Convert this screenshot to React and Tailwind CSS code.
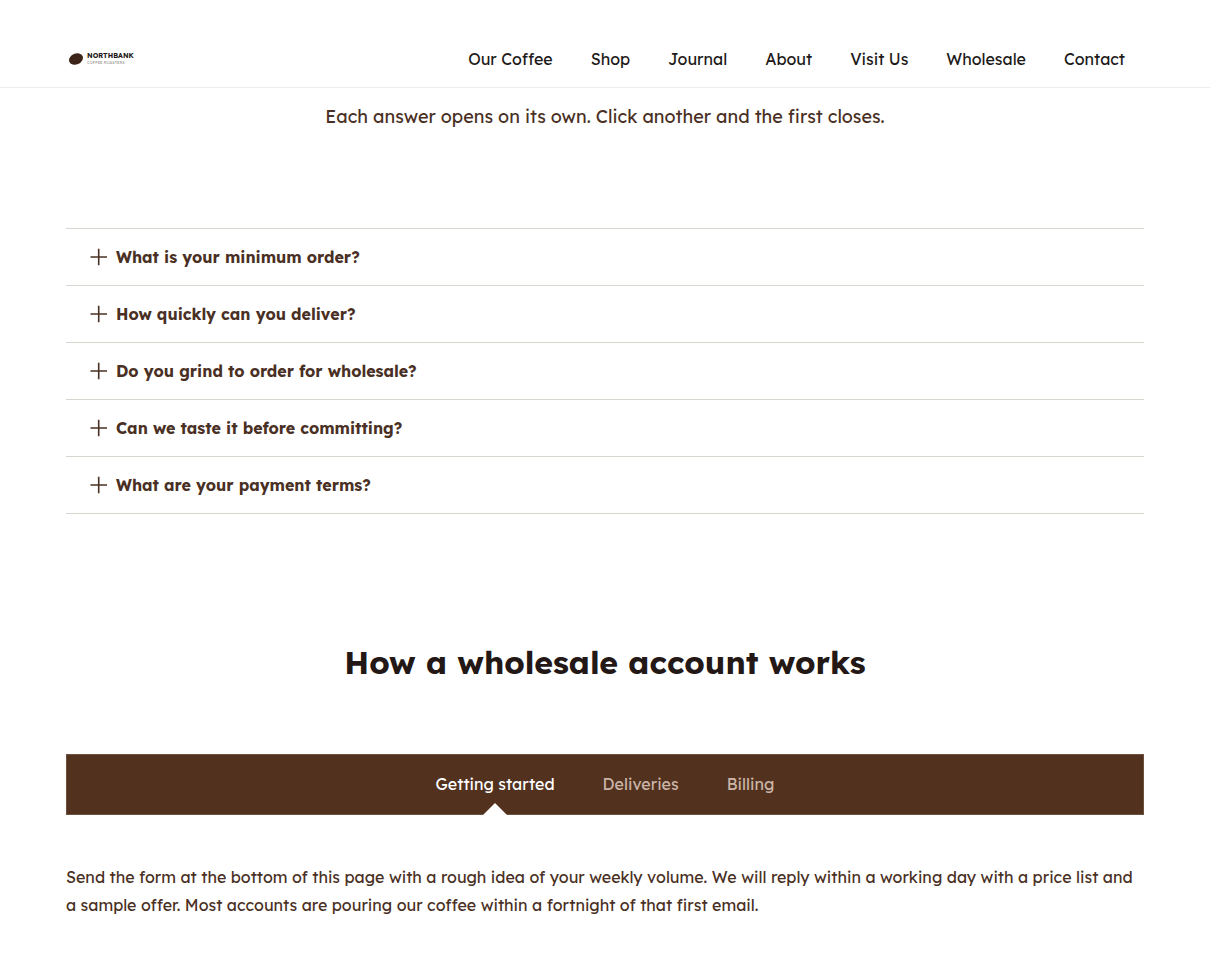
import React, { useState } from "react";

const navLinks = [
  { label: "Our Coffee", href: "#our-coffee" },
  { label: "Shop", href: "#shop" },
  { label: "Journal", href: "#journal" },
  { label: "About", href: "#about" },
  { label: "Visit Us", href: "#visit" },
  { label: "Wholesale", href: "#wholesale" },
  { label: "Contact", href: "#contact" },
];

const questions = [
  { q: "What is your minimum order?", a: "Ask us for the current minimum for your area." },
  { q: "How quickly can you deliver?", a: "We will confirm a delivery day with your order." },
  { q: "Do you grind to order for wholesale?", a: "Tell us your brew method and we will advise." },
  { q: "Can we taste it before committing?", a: "Yes, get in touch to arrange a tasting." },
  { q: "What are your payment terms?", a: "Terms are agreed when your account is opened." },
];

const tabs = [
  {
    label: "Getting started",
    text: "Send the form at the bottom of this page with a rough idea of your weekly volume. We will reply within a working day with a price list and a sample offer. Most accounts are pouring our coffee within a fortnight of that first email.",
  },
  { label: "Deliveries", text: "Your delivery day is agreed with you when the account opens." },
  { label: "Billing", text: "Invoices are sent by email to your accounts address." },
];

function Logo() {
  return (
    <a href="#home" className="flex items-center gap-[3px] text-[#231815]">
      <svg viewBox="0 0 16 14" className="h-[14px] w-4" aria-hidden="true">
        <ellipse cx="8" cy="7" rx="7.2" ry="5.4" transform="rotate(-24 8 7)" fill="#3b2417" />
        <path d="M2.5 10.5C5 7 8.500 9 13.500 3.800" fill="none" stroke="#4a3020" strokeWidth="0.6" />
      </svg>
      <span className="flex flex-col">
        <span className="text-[7px] leading-[8px] font-bold">NORTHBANK</span>
        <span className="text-[4px] leading-[6px] text-[#a09a96]">COFFEE ROASTERS</span>
      </span>
    </a>
  );
}

function Header() {
  return (
    <header className="border-b border-[#ededed] bg-white pt-[30px]">
      <div className="flex h-[57px] items-center justify-between pr-[85px] pl-[68px]">
        <Logo />
        <nav className="flex gap-[38px]">
          {navLinks.map((link) => (
            <a key={link.label} href={link.href} className="text-base text-[#1d1a19]">
              {link.label}
            </a>
          ))}
        </nav>
      </div>
    </header>
  );
}

function Accordion() {
  const [open, setOpen] = useState(-1);

  return (
    <div className="border-b border-[#d9d6d0]">
      {questions.map((item, i) => (
        <div key={item.q} className="border-t border-[#d9d6d0]">
          <button
            type="button"
            aria-expanded={open === i}
            onClick={() => setOpen(open === i ? -1 : i)}
            className="flex w-full items-center gap-2 px-6 py-4 text-left text-base font-bold text-[#4a3024]"
          >
            <svg viewBox="0 0 18 18" className="size-[18px]" fill="none" stroke="currentColor" strokeWidth="1.6" aria-hidden="true">
              <path d={open === i ? "M.5 9h16.500" : "M.5 9h16.500M8.700 .8v16.400"} />
            </svg>
            {item.q}
          </button>
          {open === i && <p className="px-6 pb-4 pl-[50px] text-[#4a3024]">{item.a}</p>}
        </div>
      ))}
    </div>
  );
}

function Tabs() {
  const [active, setActive] = useState(0);

  return (
    <div>
      <div role="tablist" className="flex justify-center gap-12 border border-[#6b5140] bg-[#52321f]">
        {tabs.map((tab, i) => (
          <button
            key={tab.label}
            type="button"
            role="tab"
            id={`tab-${i}`}
            aria-selected={active === i}
            aria-controls="tab-panel"
            onClick={() => setActive(i)}
            className={`relative pt-[17px] pb-[18px] text-base ${active === i ? "text-white" : "text-[#cbb5a8]"}`}
          >
            {tab.label}
            {/* Notch under the active tab */}
            {active === i && (
              <svg viewBox="0 0 24 12" className="absolute -bottom-px left-1/2 h-3 w-6 -translate-x-1/2" aria-hidden="true">
                <path d="M0 12 12 0 24 12Z" fill="#ffffff" />
              </svg>
            )}
          </button>
        ))}
      </div>
      <p role="tabpanel" id="tab-panel" aria-labelledby={`tab-${active}`} className="pt-12 text-base leading-7 text-[#4a3024]">
        {tabs[active].text}
      </p>
    </div>
  );
}

export default function App() {
  return (
    <div className="min-h-screen w-full bg-white font-['Lexend','Inter',sans-serif]">
      <Header />
      <main className="px-[66px] pb-14">
        <p className="pt-[15px] text-center text-lg leading-7 text-[#4a3024]">
          Each answer opens on its own. Click another and the first closes.
        </p>
        <section className="pt-[97px]">
          <Accordion />
        </section>
        <section className="pt-32">
          <h2 className="text-center text-[32px] leading-10 font-bold text-[#231815]">How a wholesale account works</h2>
          <div className="pt-18">
            <Tabs />
          </div>
        </section>
      </main>
    </div>
  );
}
